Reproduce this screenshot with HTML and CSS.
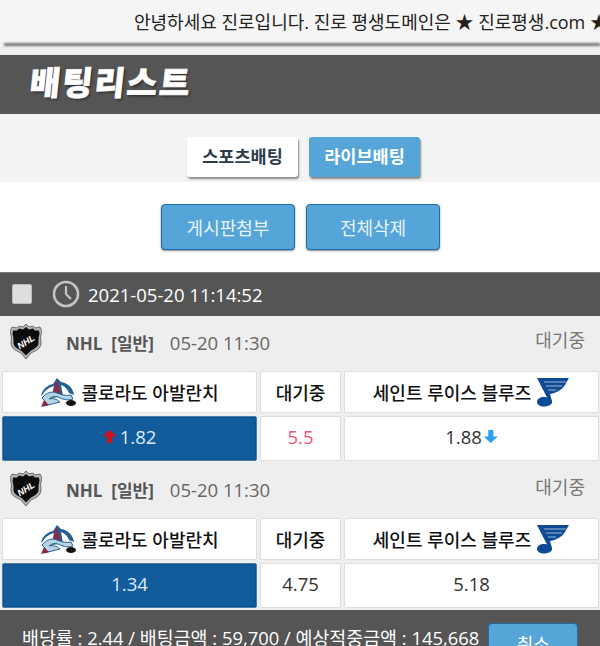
FILE: index.html
```html
<!DOCTYPE html>
<html lang="ko">
<head>
    <meta charset="UTF-8">
    <meta name="viewport" content="width=device-width, initial-scale=1.0">
    <title>배팅리스트</title>
    <link rel="stylesheet" href="styles.css">
</head>
<body>
    <svg class="defs" width="0" height="0">
        <symbol id="nhl" viewBox="0 0 32 36">
            <path d="M16 0l3 3 4-1 2 2 5-1 2 4-1 4c-1 3 0 5 0 8 0 6-6 8-10 10l-5 6-5-6C7 27 1 25 1 19c0-3 1-5 0-8L0 7l2-4 5 1 2-2 4 1z" fill="#b5b5b5" stroke="#444" stroke-width=".7"/>
            <path d="M16 3l3 2.500 4-1 2 2 4 0 .5 3.500c-1 3-1 6-1 9 0 4-5 6-8 8l-4.500 4.500-4.500-4.500c-3-2-8-4-8-8 0-3 0-6-1-9l.5-3.500 4 0 2-2 4 1z" fill="#0c0c0c"/>
            <text x="16" y="21" transform="rotate(-32 16 18)" text-anchor="middle" class="nhl-text">NHL</text>
        </symbol>
        <symbol id="avs" viewBox="0 0 36 30">
            <path d="M1 19C2 12 8 8 13 7l4-6 4 4c7 1 12 6 13 13l-5-2c-2-5-5-7-8-8l2 11-11 2 2-12c-4 1-9 4-11 8z" fill="#236192"/>
            <path d="M17 3l4 15-9 2 2-10z" fill="#8a2a46"/>
            <path d="M2 21c5-6 10-7 15-5 5 2 9 3 14 2l2 4c-6 2-11 0-15-2-4-1-7 0-9 2 4-1 8 0 11 3l-8 2-8 2 1-5z" fill="#b6d3e6" stroke="#236192" stroke-width="1"/>
            <path d="M1 30l3-7 5 5z" fill="#8a2a46"/>
            <ellipse cx="31" cy="26" rx="5" ry="3" fill="#111"/>
        </symbol>
        <symbol id="blues" viewBox="0 0 34 30">
            <path d="M1 1h32l-4 7c-3 5-9 8-15 9l2 7c1 3-3 5.500-8 5.500-4 0-7-2-7-4.500 0-3 3-5 7-5 1 0 2 0 3 .5z" fill="#0f4a97"/>
            <path d="M8 5h22M10 9h16M12 13h8" stroke="#9fb6cf" stroke-width="1.100"/>
        </symbol>
    </svg>

    <div class="ticker">안녕하세요 진로입니다. 진로 평생도메인은 ★ 진로평생.com ★ 진로평생.com</div>
    <div class="ticker-shadow"></div>

    <h1 class="title"><span>배팅리스트</span></h1>

    <div class="tabs">
        <a class="tab">스포츠배팅</a>
        <a class="tab tab-on">라이브배팅</a>
    </div>

    <div class="actions">
        <button class="btn">게시판첨부</button>
        <button class="btn">전체삭제</button>
    </div>

    <div class="date-bar">
        <span class="check"></span>
        <svg class="clock" width="28" height="28" viewBox="0 0 28 28"><circle cx="14" cy="14" r="12" fill="none" stroke="#c4c4c4" stroke-width="2.6"/><path d="M14 6v8l5 5" fill="none" stroke="#c4c4c4" stroke-width="2.200"/></svg>
        <span>2021-05-20 11:14:52</span>
    </div>

    <div class="game">
        <div class="game-head">
            <svg class="nhl-logo"><use href="#nhl"/></svg>
            <b class="league">NHL&nbsp;&nbsp;[일반]</b>
            <span class="time">05-20 11:30</span>
            <span class="state">대기중</span>
        </div>
        <div class="grid">
            <div class="cell team"><svg class="avs-logo"><use href="#avs"/></svg>콜로라도 아발란치</div>
            <div class="cell team">대기중</div>
            <div class="cell team">세인트 루이스 블루즈<svg class="blues-logo"><use href="#blues"/></svg></div>
            <div class="cell odds picked"><i class="up"></i>1.82</div>
            <div class="cell odds draw">5.5</div>
            <div class="cell odds">1.88<i class="down"></i></div>
        </div>
    </div>

    <div class="game">
        <div class="game-head">
            <svg class="nhl-logo"><use href="#nhl"/></svg>
            <b class="league">NHL&nbsp;&nbsp;[일반]</b>
            <span class="time">05-20 11:30</span>
            <span class="state">대기중</span>
        </div>
        <div class="grid">
            <div class="cell team"><svg class="avs-logo"><use href="#avs"/></svg>콜로라도 아발란치</div>
            <div class="cell team">대기중</div>
            <div class="cell team">세인트 루이스 블루즈<svg class="blues-logo"><use href="#blues"/></svg></div>
            <div class="cell odds picked">1.34</div>
            <div class="cell odds">4.75</div>
            <div class="cell odds">5.18</div>
        </div>
    </div>

    <div class="summary">
        <span>배당률 : 2.44 / 배팅금액 : 59,700 / 예상적중금액 : 145,668</span>
        <button class="cancel">취소</button>
    </div>
</body>
</html>
```

FILE: styles.css
```css
html, body {
    height: 646px;
    overflow: hidden;
}
body {
    margin: 0;
    font-family: "Open Sans", "Noto Sans CJK KR", sans-serif;
    background: #fff;
    color: #222;
}
.defs { display: block; }
.ticker {
    height: 43px;
    line-height: 44px;
    padding-left: 134px;
    background: #f5f5f5;
    font-size: 18px;
    color: #222;
    white-space: nowrap;
    overflow: hidden;
}
.ticker-shadow {
    height: 12px;
    background: #f0f0f0;
}
.ticker-shadow::before {
    content: "";
    display: block;
    height: 3px;
    margin-left: 4px;
    background: #777;
    filter: blur(1px);
}
.title {
    margin: 0;
    height: 59px;
    line-height: 55px;
    padding-left: 30px;
    background: #555;
    color: #fff;
    font-size: 33px;
    font-weight: 900;
    letter-spacing: 2px;
    -webkit-text-stroke: .7px #fff;
    text-shadow: 2px 2px 2px #333;
    box-shadow: 0 1px 2px #999;
}
.title span {
    display: inline-block;
    transform: skewX(-6deg);
}
.tabs {
    height: 68px;
    box-sizing: border-box;
    padding-top: 23px;
    background: #f3f3f3;
    display: flex;
    justify-content: center;
    gap: 11px;
    padding-left: 7px;
}
.tab {
    width: 111px;
    height: 40px;
    line-height: 38px;
    text-align: center;
    background: #fff;
    color: #2c3a4d;
    font-size: 17.5px;
    font-weight: 700;
    border-radius: 3px;
    box-shadow: 1px 2px 2px #888;
}
.tab-on {
    background: #55a5d9;
    color: #fff;
}
.actions {
    height: 90px;
    box-sizing: border-box;
    padding: 22px 0 0 1px;
    display: flex;
    justify-content: center;
    gap: 11px;
}
.btn {
    width: 134px;
    height: 46px;
    background: #55a5d9;
    color: #e8f3fa;
    font-family: inherit;
    font-size: 18px;
    border: 1px solid #1f6aa8;
    border-radius: 4px;
    box-shadow: 0 1px 2px #888;
}
.date-bar {
    height: 44px;
    display: flex;
    align-items: center;
    background: #555;
    color: #fff;
    font-size: 18.5px;
    padding: 0 0 1px 12px;
    border-top: 1px solid #777;
    box-sizing: border-box;
}
.check {
    width: 20px;
    height: 20px;
    background: #dedede;
    border: 1px solid #bbb;
    box-sizing: border-box;
    border-radius: 2px;
    margin-right: 20px;
}
.clock { margin-right: 8px; }
.game {
    height: 147px;
    background: #eee;
}
.game-head {
    height: 54px;
    box-sizing: border-box;
    padding: 0 0 2px 10px;
    display: flex;
    align-items: center;
    position: relative;
    font-size: 18px;
    color: #666;
}
.nhl-logo {
    width: 32px;
    height: 36px;
    margin-right: 24px;
}
.nhl-text {
    font: italic 900 9px "Liberation Sans", sans-serif;
    fill: #fff;
}
.league {
    font-size: 17px;
    color: #555;
    margin-right: 16px;
}
.time {
    font-size: 18.5px;
    color: #666;
}
.state {
    position: absolute;
    right: 15px;
    top: 10px;
    color: #777;
}
.grid {
    display: grid;
    grid-template-columns: 255px 81px 255px;
    grid-template-rows: 42px 45px;
    gap: 3px;
    padding: 1px 1px 0 2px;
}
.cell {
    display: flex;
    align-items: center;
    justify-content: center;
    background: #fff;
    border: 1px solid #ddd;
    border-radius: 2px;
    box-sizing: border-box;
    font-size: 18px;
}
.team {
    padding-bottom: 1px;
    font-weight: 500;
    color: #111;
}
.odds {
    padding-bottom: 4px;
    font-size: 18.5px;
    color: #333;
}
.picked {
    background: #125c9c;
    border-color: #4c7fa8;
    color: #dbe9f4;
    box-shadow: inset 0 0 2px #0a3a66;
}
.draw { color: #f0567a; }
.avs-logo {
    width: 36px;
    height: 30px;
    margin-right: 5px;
}
.blues-logo {
    width: 34px;
    height: 30px;
    margin-left: 5px;
}
.up, .down {
    display: inline-block;
    width: 14px;
    height: 13px;
}
.up {
    margin-right: 3px;
    background: #d0101c;
    clip-path: polygon(50% 0, 100% 50%, 68% 50%, 68% 100%, 32% 100%, 32% 50%, 0 50%);
}
.down {
    margin-left: 2px;
    background: #2a9df4;
    clip-path: polygon(32% 0, 68% 0, 68% 50%, 100% 50%, 50% 100%, 0 50%, 32% 50%);
}
.summary {
    height: 36px;
    box-sizing: border-box;
    display: flex;
    align-items: flex-start;
    padding: 14px 0 0 22px;
    background: #555;
    color: #fff;
    font-size: 18.4px;
    white-space: nowrap;
    overflow: hidden;
}
.cancel {
    flex: none;
    width: 90px;
    height: 40px;
    margin: -1px 0 0 9px;
    background: #55a5d9;
    color: #fff;
    font-family: inherit;
    font-size: 18px;
    border: 1px solid #1f6aa8;
    border-radius: 4px;
}
```
